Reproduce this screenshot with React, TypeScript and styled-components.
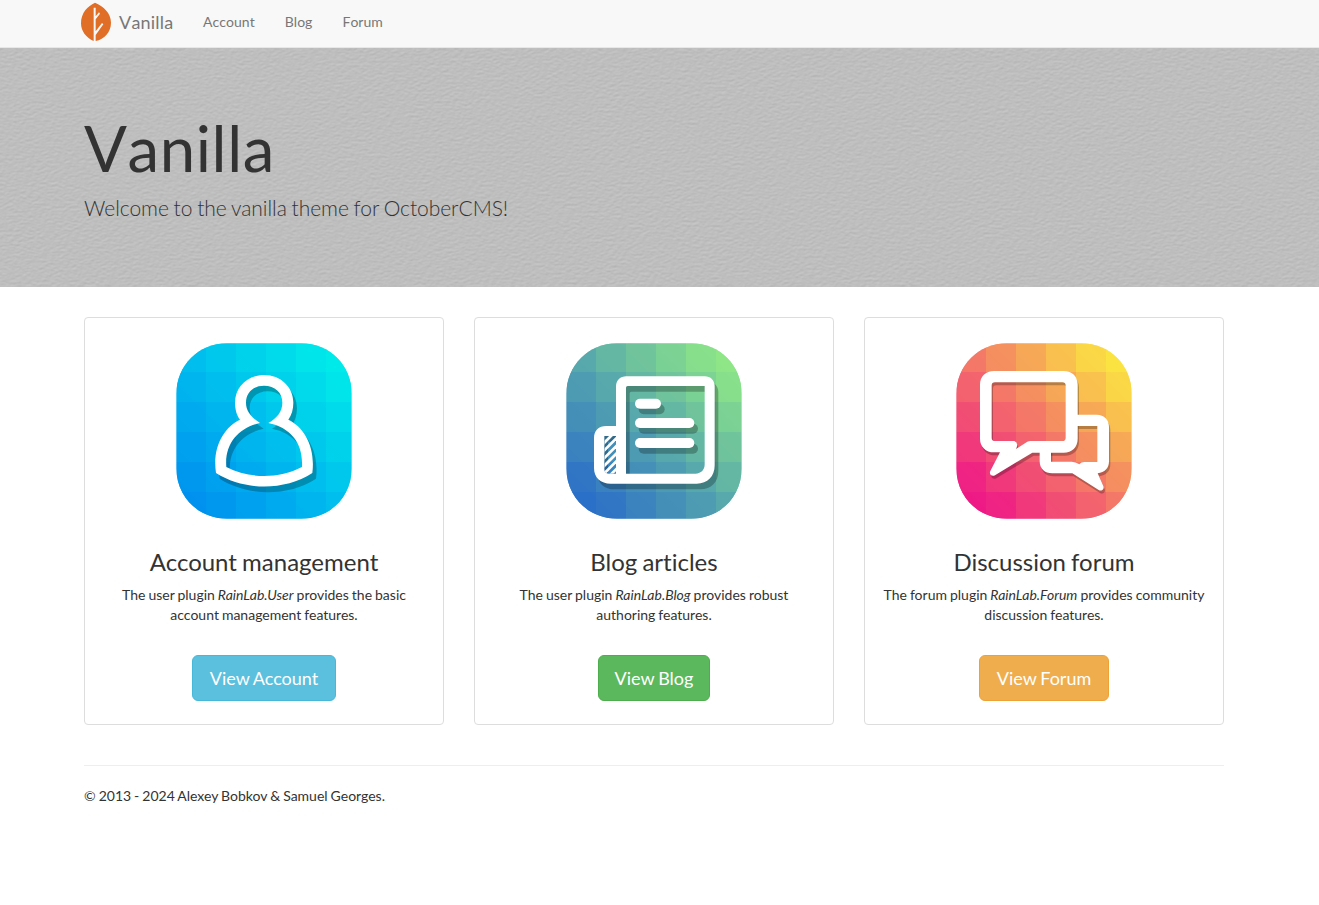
import React from 'react';
import styled, { createGlobalStyle } from 'styled-components';

const GlobalStyle = createGlobalStyle`
  *, *::before, *::after { box-sizing: border-box; word-spacing: -0.042em; }
  body {
    margin: 0;
    background: #fff;
    color: #333;
    font: 14px/20px Lato, sans-serif;
    font-variant-ligatures: none;
  }
`;

const Container = styled.div`
  width: 1140px;
  margin-left: 84px;
`;

const Navbar = styled.nav`
  height: 48px;
  background: #f8f8f8;
  border-bottom: 1px solid #e7e7e7;
`;

const NavRow = styled(Container)`
  display: flex;
  align-items: flex-start;
`;

const Brand = styled.a`
  display: flex;
  gap: 8px;
  width: 107px;
  margin-left: -3px;
  color: #777;
  font-size: 18px;
  line-height: 20px;
  letter-spacing: 0.2px;
  font-kerning: none;
  span { padding-top: 12px; }
`;

const LeafSvg = styled.svg`
  display: block;
  flex: none;
  width: 30px;
  height: 40px;
  margin-top: 2px;
`;

const NavLink = styled.a`
  padding: 12px 15px;
  color: #777;
  letter-spacing: 0.04px;
  font-kerning: none;
`;

const Hero = styled.header`
  position: relative;
  height: 239px;
  padding-top: 60px;
  background: #bcbcbc;
  overflow: hidden;
`;

const Texture = styled.svg`
  position: absolute;
  inset: 0;
  width: 100%;
  height: 100%;
`;

const HeroContent = styled(Container)`
  position: relative;
`;

const HeroTitle = styled.h1`
  margin: 5px 0 11px;
  font-size: 63.5px;
  font-weight: 400;
  line-height: 69px;
  letter-spacing: 0.6px;
  font-kerning: none;
`;

const HeroLead = styled.p`
  margin: 0;
  font-size: 21px;
  font-weight: 300;
  line-height: 30px;
  letter-spacing: -0.05px;
`;

const Cards = styled.main`
  display: grid;
  grid-template-columns: repeat(3, 360px);
  gap: 30px;
  margin-top: 30px;
`;

const Card = styled.section`
  display: flex;
  flex-direction: column;
  align-items: center;
  height: 408px;
  padding: 25px 15px 0;
  border: 1px solid #ddd;
  border-radius: 4px;
  text-align: center;
`;

const AppIcon = styled.svg`
  display: block;
  width: 176px;
  height: 176px;
`;

const CardTitle = styled.h3`
  margin: 30px 0 10px;
  font-size: 24px;
  font-weight: 400;
  line-height: 26px;
`;

const CardText = styled.p`
  margin: 0 0 30px;
`;

const TextLine = styled.span`
  display: block;
  white-space: nowrap;
`;

const Button = styled.a<{ $fill: string; $edge: string; $width: number }>`
  width: ${(p) => p.$width}px;
  padding: 10px 0;
  border: 1px solid ${(p) => p.$edge};
  border-radius: 6px;
  background: ${(p) => p.$fill};
  color: #fff;
  font-size: 18px;
  line-height: 24px;
  white-space: nowrap;
`;

const Footer = styled.footer`
  margin-top: 40px;
  padding-top: 20px;
  border-top: 1px solid #eee;
`;

type Rgb = [number, number, number];

const mix = (a: Rgb, b: Rgb, t: number) =>
  `rgb(${a.map((v, i) => Math.round(v + (b[i] - v) * t)).join(',')})`;

const edges = [18, 108, 198, 288, 378, 468, 546];
const rows = [18, 105, 195, 285, 375, 465, 546];

function Tile({ id, low, mid, high, children }: {
  id: string; low: Rgb; mid: Rgb; high: Rgb; children: React.ReactNode;
}) {
  const shade = (t: number) => (t < 0.5 ? mix(low, mid, t * 2) : mix(mid, high, t * 2 - 1));
  return (
    <AppIcon viewBox="18 18 528 528">
      <defs>
        <linearGradient id={`${id}-bg`} x1="0.1" y1="0.9" x2="0.9" y2="0.1">
          <stop offset="0" stopColor={shade(0)} />
          <stop offset="0.5" stopColor={shade(0.5)} />
          <stop offset="1" stopColor={shade(1)} />
        </linearGradient>
        <clipPath id={`${id}-clip`}>
          <path d="M171 19H393C480 19 545 86 545 171V393C545 480 480 545 393 545H171C86 545 19 480 19 393V171C19 86 86 19 171 19Z" />
        </clipPath>
      </defs>
      <g clipPath={`url(#${id}-clip)`}>
        <rect x="18" y="18" width="528" height="528" fill={`url(#${id}-bg)`} />
        <g opacity="0.9" shapeRendering="crispEdges">
          {rows.slice(0, -1).map((y, r) =>
            edges.slice(0, -1).map((x, c) => (
              <rect key={`${r}-${c}`} x={x} y={y} width={edges[c + 1] - x} height={rows[r + 1] - y}
                fill={shade(Math.min(1, Math.max(0, (c + 4.5 - r) / 9)))} />
            )),
          )}
        </g>
      </g>
      {children}
    </AppIcon>
  );
}

function AccountShape(props: React.SVGProps<SVGPathElement>) {
  return (
    <path
      {...props}
      fillRule="evenodd"
      d="M210 248C200 235 195 215 195 197C195 150 232 114 282 114C332 114 370 150 370 197C370 216 365 234 355 248C402 270 437 329 427 408C343 462 224 462 138 408C126 329 163 270 210 248ZM270 258C246 242 228 224 228 197C228 166 250 146 282 146C315 146 337 166 337 197C337 224 321 243 295 258C362 272 400 318 396 390C326 426 239 426 169 390C163 318 208 272 270 258Z"
    />
  );
}

function AccountIcon() {
  return (
    <Tile id="account" low={[0, 146, 238]} mid={[0, 190, 238]} high={[0, 234, 234]}>
      <AccountShape fill="#000" opacity={0.25} transform="translate(11 17)" />
      <AccountShape fill="#fff" />
    </Tile>
  );
}

function NewsShape({ color, ...rest }: { color: string } & React.SVGProps<SVGGElement>) {
  return (
    <g fill={color} {...rest}>
      <path fillRule="evenodd" d="M199 118H434C452 118 464 130 464 148V385C464 418 443 440 410 440H152C122 440 102 422 102 393V304C102 280 116 267 139 267H168V149C168 130 181 118 199 118ZM203 147Q198 147 198 152V410H406C424 410 434 398 434 382V147ZM133 297H168V410H146Q133 409 133 396Z" />
      <rect x="225" y="185" width="78" height="30" rx="15" />
      <rect x="225" y="243" width="178" height="30" rx="15" />
      <rect x="225" y="303" width="178" height="30" rx="15" />
    </g>
  );
}

function BlogIcon() {
  return (
    <Tile id="blog" low={[44, 112, 200]} mid={[88, 169, 172]} high={[142, 230, 136]}>
      <clipPath id="fold"><path d="M133 297H168V410H146Q133 409 133 396Z" /></clipPath>
      <NewsShape color="#000" opacity={0.25} transform="translate(11 17)" />
      <NewsShape color="#fff" />
      <g clipPath="url(#fold)" stroke="#fff" strokeWidth="8">
        {[450, 473, 496, 519, 542, 565].map((s) => (
          <line key={s} x1={120} y1={s - 120} x2={180} y2={s - 180} />
        ))}
      </g>
    </Tile>
  );
}

const bigBubble =
  'M132 102H341C367 102 383 119 383 143V305C383 331 366 347 341 347H247L135 415C126 420 116 412 121 402L150 346H132C107 346 90 329 90 305V143C90 118 107 102 132 102ZM135 136Q125 136 125 146V302Q125 312 135 312H193Q207 317 198 336L232 314Q236 312 242 312H337Q347 312 347 302V146Q347 136 337 136Z';
const smallBubble =
  'M381 233H440C463 233 477 248 477 270V373C477 394 464 407 443 409L460 447C464 456 455 464 446 459L367 409H307C284 409 269 395 269 373V340H303V374H365Q377 375 388 382Q393 375 403 375H442V267H381Z';

function ForumIcon() {
  return (
    <Tile id="forum" low={[238, 26, 134]} mid={[244, 120, 104]} high={[251, 228, 66]}>
      <path d={smallBubble} opacity="0.25" transform="translate(4 9)" />
      <path d={bigBubble} fillRule="evenodd" opacity="0.25" transform="translate(4 9)" />
      <path d={bigBubble} fillRule="evenodd" fill="#fff" />
      <path d={smallBubble} fill="#fff" />
    </Tile>
  );
}

function Leaf() {
  return (
    <LeafSvg viewBox="0 0 90 120">
      <path fill="#e06e27" d="M42 2C20 12 0 32 0 64C0 88 16 108 38 117V17H44V43L54 31L57 35L44 52V88L63 63L67 67L44 99V117C70 112 90 90 90 62C90 33 67 12 42 2Z" />
    </LeafSvg>
  );
}

function Leather() {
  return (
    <Texture>
      <filter id="leather" x="0" y="0" width="100%" height="100%" colorInterpolationFilters="sRGB">
        <feTurbulence type="fractalNoise" baseFrequency="0.22 0.42" numOctaves="3" seed="4" />
        <feColorMatrix values="0 0 0 0 0  0 0 0 0 0  0 0 0 0 0  1 0 0 0 0" />
        <feDiffuseLighting surfaceScale="0.16" diffuseConstant="0.87" lightingColor="#fff">
          <feDistantLight azimuth="250" elevation="59" />
        </feDiffuseLighting>
      </filter>
      <rect width="100%" height="100%" filter="url(#leather)" />
    </Texture>
  );
}

const features = [
  { title: 'Account management', before: 'The user plugin ', name: 'RainLab.User', after: ' provides the basic', second: 'account management features.', action: 'View Account', fill: '#5bc0de', edge: '#46b8da', width: 144, Icon: AccountIcon },
  { title: 'Blog articles', before: 'The user plugin ', name: 'RainLab.Blog', after: ' provides robust', second: 'authoring features.', action: 'View Blog', fill: '#5cb85c', edge: '#4cae4c', width: 112, Icon: BlogIcon },
  { title: 'Discussion forum', before: 'The forum plugin ', name: 'RainLab.Forum', after: ' provides community', second: 'discussion features.', action: 'View Forum', fill: '#f0ad4e', edge: '#eea236', width: 130, Icon: ForumIcon },
];

export default function App() {
  return (
    <>
      <GlobalStyle />
      <Navbar>
        <NavRow>
          <Brand><Leaf /><span>Vanilla</span></Brand>
          <NavLink>Account</NavLink>
          <NavLink>Blog</NavLink>
          <NavLink>Forum</NavLink>
        </NavRow>
      </Navbar>
      <Hero>
        <Leather />
        <HeroContent>
          <HeroTitle>Vanilla</HeroTitle>
          <HeroLead>Welcome to the vanilla theme for OctoberCMS!</HeroLead>
        </HeroContent>
      </Hero>
      <Container>
        <Cards>
          {features.map(({ title, before, name, after, second, action, fill, edge, width, Icon }) => (
            <Card key={title}>
              <Icon />
              <CardTitle>{title}</CardTitle>
              <CardText>
                <TextLine>{before}<em>{name}</em>{after}</TextLine>
                <TextLine>{second}</TextLine>
              </CardText>
              <Button $fill={fill} $edge={edge} $width={width}>{action}</Button>
            </Card>
          ))}
        </Cards>
        <Footer>© 2013 - 2024 Alexey Bobkov &amp; Samuel Georges.</Footer>
      </Container>
    </>
  );
}
